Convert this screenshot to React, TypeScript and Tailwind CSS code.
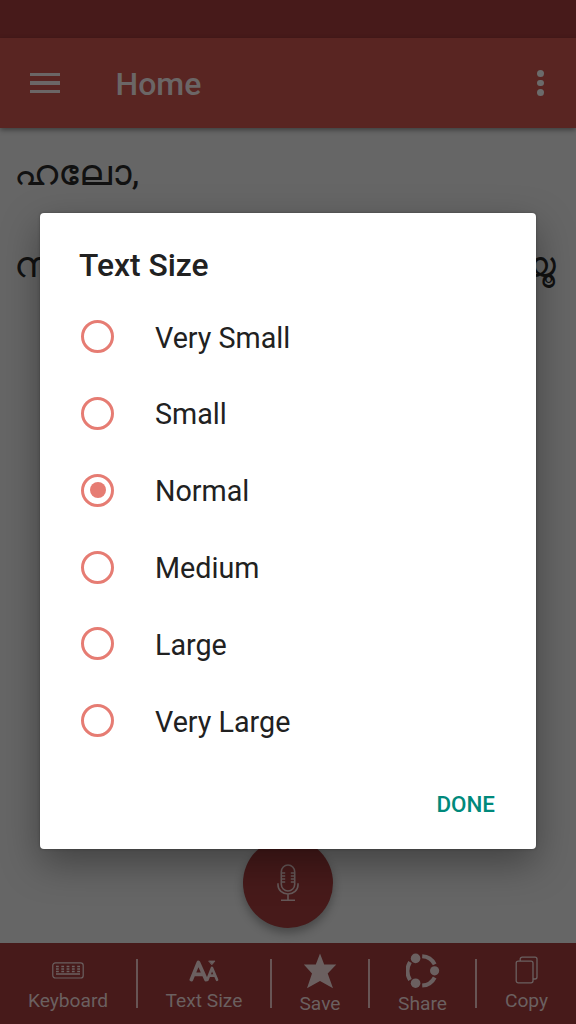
import { useState } from "react";
import type { ReactNode } from "react";

const SIZES = ["Very Small", "Small", "Normal", "Medium", "Large", "Very Large"];

function KeyboardIcon() {
  return (
    <svg width="32" height="17" viewBox="0 0 32 17" fill="none" stroke="currentColor">
      <rect x="0.8" y="0.8" width="30.4" height="15.2" rx="2.6" strokeWidth="1.2" />
      <path d="M4 4.5h24M4 7h24M4 9.5h24" strokeWidth="1.3" strokeDasharray="2.8 2.5" />
      <path d="M4 12h24" strokeWidth="1.5" />
    </svg>
  );
}

function TextSizeIcon() {
  return (
    <svg width="30" height="22" viewBox="0 0 30 22" fill="none" stroke="currentColor" strokeLinecap="round" strokeLinejoin="round">
      <path d="M2.4 19.6L9.4 2.4L17 19.6M5.4 14.4h8.6" strokeWidth="3.8" />
      <path d="M18.4 19.8L23 8L28 19.8M20.5 15.6h5.2" strokeWidth="2.7" />
      <path d="M20 1h6L23 4.6Z" fill="currentColor" strokeWidth="0.8" />
    </svg>
  );
}

function StarIcon() {
  return (
    <svg width="34" height="36" viewBox="0 0 34 36" fill="currentColor">
      <path d="M17 0.5L21.2 11.6H33.3L24.7 20.4L30 35.2L17 28L4 35.2L9 20.4L0.8 11.6H12.8Z" />
    </svg>
  );
}

function ShareIcon() {
  return (
    <svg width="34" height="36" viewBox="0 0 34 36" fill="currentColor">
      <circle cx="9.6" cy="5.4" r="4.8" />
      <circle cx="9.6" cy="30.2" r="4.8" />
      <circle cx="28.6" cy="17.8" r="4.6" />
      <g fill="none" stroke="currentColor" strokeWidth="4">
        <path d="M16.2 3.2A15 15 0 0 1 28.7 11.3" />
        <path d="M28.7 24.5A15 15 0 0 1 16.2 32.6" />
        <path d="M4 9A18 18 0 0 0 4 27" />
      </g>
    </svg>
  );
}

function CopyIcon() {
  return (
    <svg width="24" height="28" viewBox="0 0 24 28" fill="none" stroke="currentColor" strokeWidth="1.3">
      <rect x="1.2" y="5.2" width="16.8" height="21.6" rx="2" />
      <path d="M5.2 5V3.2A2 2 0 0 1 7.2 1.2H20A2 2 0 0 1 22 3.2V21A2 2 0 0 1 20 23H18" />
    </svg>
  );
}

function MicIcon() {
  return (
    <svg width="22" height="38" viewBox="0 0 22 38" fill="none" stroke="currentColor" strokeWidth="1.6">
      <rect x="4.3" y="1" width="13.4" height="26" rx="6.7" />
      <path d="M1 19.3V21a10 9 0 0 0 20 0V19.3M11 30V36M4 36.2H18" />
      <path d="M5 9h3.2M5 12h3.2M5 15h3.2M5 18h3.2M13.8 9H17M13.8 12H17M13.8 15H17M13.8 18H17" strokeWidth="1.3" />
    </svg>
  );
}

function Tool({ icon, label }: { icon: ReactNode; label: string }) {
  return (
    <button className="flex h-full flex-1 flex-col items-center text-[19.2px] leading-6 whitespace-nowrap text-[#6b6060]">
      {icon}
      <span>{label}</span>
    </button>
  );
}

function Divider() {
  return <span className="mt-4 h-[49px] w-[2px] shrink-0 bg-[#685555]" />;
}

export default function App() {
  const [selected, setSelected] = useState("Normal");

  return (
    <div className="relative flex h-[1024px] w-[576px] flex-col overflow-hidden bg-[#666666] font-[Roboto,sans-serif]">
      <div className="h-[38.4px] shrink-0 bg-[#471a1a]" />
      <header className="relative flex h-[89.6px] shrink-0 items-center bg-[#592522] pr-[32px] pl-[30px] text-[#6b6666] shadow-[0_2px_5px_rgba(0,0,0,0.4)]">
        <button className="flex w-[30px] flex-col gap-[5px]">
          <span className="h-[3.5px] bg-[#6b6666]" />
          <span className="h-[3.5px] bg-[#6b6666]" />
          <span className="h-[3.5px] bg-[#6b6666]" />
        </button>
        <h1 className="mt-px ml-[55.5px] text-[32px] font-medium">Home</h1>
        <button className="ml-auto flex flex-col gap-[3px]">
          <span className="size-[6.6px] rounded-full bg-[#6b6b6b]" />
          <span className="size-[6.6px] rounded-full bg-[#6b6b6b]" />
          <span className="size-[6.6px] rounded-full bg-[#6b6b6b]" />
        </button>
      </header>

      <main className="flex grow flex-col pt-[23px] text-[35px] leading-[46px] text-[#111111]">
        <p className="ml-[14px] origin-left scale-x-110">ഹലോ,</p>
        <p className="mt-[46px] mr-5 ml-[14px] flex justify-between">
          <span className="origin-left scale-x-110">ന</span>
          <span>യൂ</span>
        </p>
        <button className="mt-auto mb-[15.5px] flex size-[90px] items-center justify-center self-center rounded-full bg-[#471a1a] text-[#655858] shadow-[0_5px_10px_rgba(0,0,0,0.3)]">
          <MicIcon />
        </button>
      </main>

      <footer className="flex h-[80.6px] shrink-0 bg-[#471a1a]">
        <div className="flex w-[136px]"><Tool icon={<span className="mt-[19px] mb-[10px]"><KeyboardIcon /></span>} label="Keyboard" /></div>
        <Divider />
        <div className="flex w-[132px]"><Tool icon={<span className="mt-[17px] mb-[7px]"><TextSizeIcon /></span>} label="Text Size" /></div>
        <Divider />
        <div className="flex w-[96px]"><Tool icon={<span className="mt-[10px] mb-[3px]"><StarIcon /></span>} label="Save" /></div>
        <Divider />
        <div className="flex w-[105px]"><Tool icon={<span className="mt-[10px] mb-[3px]"><ShareIcon /></span>} label="Share" /></div>
        <Divider />
        <div className="flex w-[99px]"><Tool icon={<span className="mt-[13px] mb-[5px]"><CopyIcon /></span>} label="Copy" /></div>
      </footer>

      {/* Text size dialog */}
      <div role="dialog" className="absolute top-[213px] left-[40px] flex h-[635.5px] w-[496px] flex-col rounded-[4px] bg-white text-[#212121] shadow-[0_14px_38px_rgba(0,0,0,0.36),0_0_3px_rgba(0,0,0,0.3)]">
        <h2 className="mt-[29px] ml-[39px] text-[31.8px] leading-[46px] font-medium">Text Size</h2>
        <div className="mt-[10.3px] flex flex-col">
          {SIZES.map((size) => (
            <button key={size} onClick={() => setSelected(size)} className="flex h-[76.8px] items-center pl-[41px] text-left">
              <span className="flex size-[33px] items-center justify-center rounded-full border-[3.5px] border-[#e67c73]">
                {selected === size && <span className="size-4 rounded-full bg-[#e67c73]" />}
              </span>
              <span className="mt-[2px] ml-[41px] text-[28.7px] leading-9">{size}</span>
            </button>
          ))}
        </div>
        <button className="mt-[29px] mr-[41px] self-end text-[22.4px] leading-8 font-medium text-[#00897b]">DONE</button>
      </div>
    </div>
  );
}
